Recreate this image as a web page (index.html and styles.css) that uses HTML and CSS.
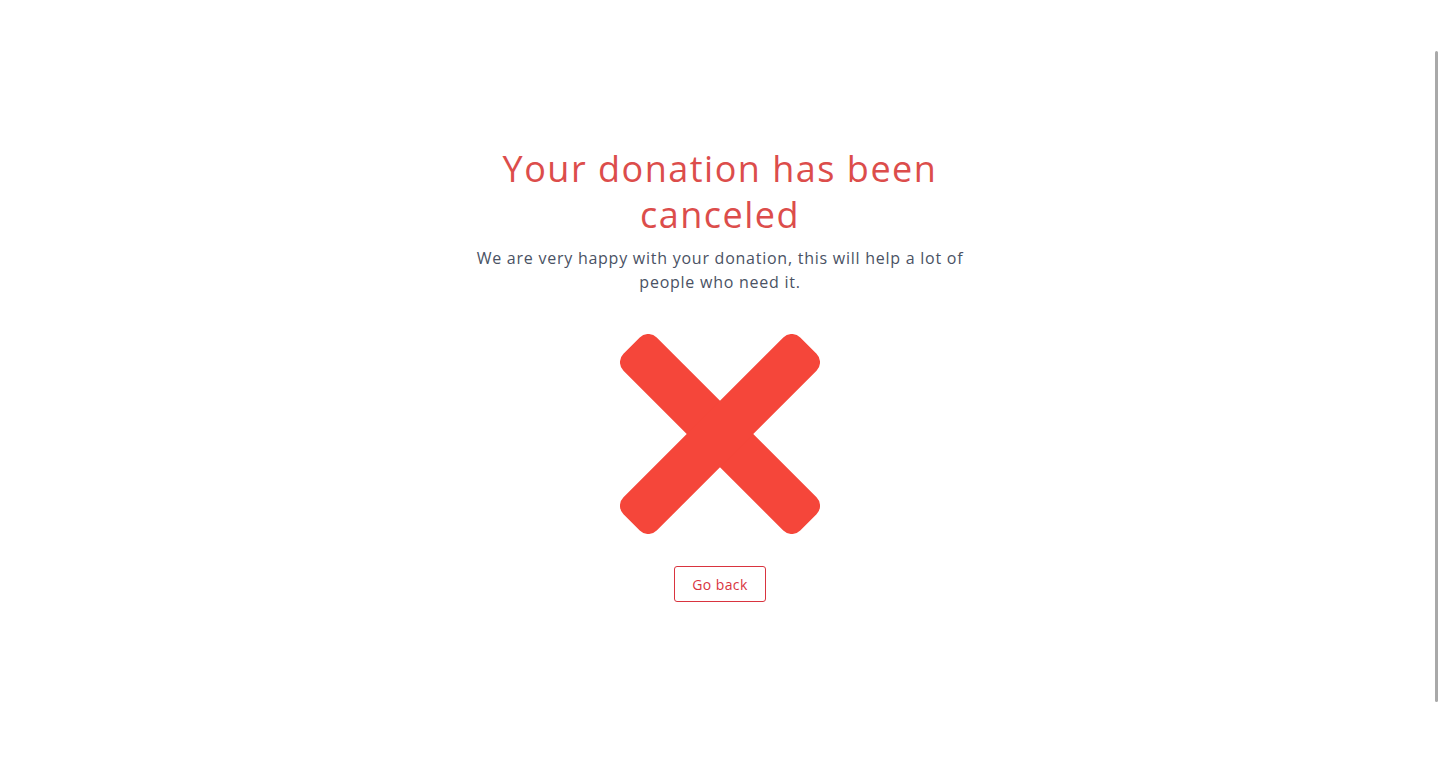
FILE: index.html
```html
<!DOCTYPE html>
<html lang="en">
<head>
<meta charset="utf-8">
<title>Donation canceled</title>
<link rel="stylesheet" href="styles.css">
</head>
<body>
<main class="page">
  <section class="card">
    <h1 class="title">Your donation has been canceled</h1>
    <p class="lead">We are very happy with your donation, this will help a lot of people who need it.</p>
    <svg class="xmark" width="200" height="200" viewBox="0 0 200 200" aria-hidden="true">
      <g transform="translate(100 100)" fill="#f5463a">
        <rect x="-125" y="-23.5" width="250" height="47" rx="12" transform="rotate(45)"/>
        <rect x="-125" y="-23.5" width="250" height="47" rx="12" transform="rotate(-45)"/>
      </g>
    </svg>
    <a class="btn" href="#">Go back</a>
  </section>
</main>
<div class="scroll-thumb"></div>
</body>
</html>
```
FILE: styles.css
```css
* { box-sizing: border-box; }
html, body { margin: 0; padding: 0; background: #fff; }
body { font-family: "Open Sans", "Liberation Sans", sans-serif; }
.page {
  display: flex;
  justify-content: center;
  padding-top: 144px;
}
.card {
  width: 500px;
  display: flex;
  flex-direction: column;
  align-items: center;
  text-align: center;
}
.title {
  margin: 2px 0 0;
  font-size: 36px;
  line-height: 46px;
  font-weight: 400;
  letter-spacing: 1.5px;
  color: #dc4d4b;
  max-width: 470px;
}
.lead {
  margin: 8px 0 0;
  font-size: 16px;
  line-height: 24px;
  letter-spacing: 0.75px;
  color: #4a5264;
}
.xmark {
  display: block;
  margin-top: 40px;
}
.btn {
  margin-top: 32px;
  display: inline-flex;
  align-items: center;
  justify-content: center;
  width: 92px;
  height: 36px;
  border: 1px solid #d9343f;
  border-radius: 3px;
  color: #d9343f;
  font-size: 14px;
  letter-spacing: 0.4px;
  text-decoration: none;
}
.scroll-thumb {
  position: fixed;
  right: 2px;
  top: 51px;
  width: 3px;
  height: 651px;
  background: #a9a9a9;
  border-radius: 2px;
}
```
